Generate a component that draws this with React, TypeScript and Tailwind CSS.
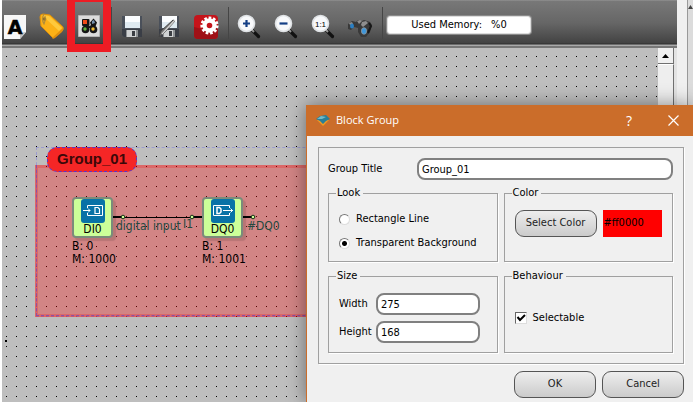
import type { ReactNode } from "react";

const UI_FONT = "font-['DejaVu_Sans_Condensed','DejaVu_Sans',sans-serif]";

function ToolButton({ label, children }: { label: string; children: ReactNode }) {
  return (
    <button type="button" aria-label={label} className="size-6 shrink-0">
      <svg viewBox="0 0 24 24" className="size-6 overflow-visible" aria-hidden="true">
        {children}
      </svg>
    </button>
  );
}

function Separator() {
  return <div className="mr-1 ml-[10px] h-8 w-px shrink-0 bg-[#454545]" />;
}

function Magnifier({ children }: { children?: ReactNode }) {
  return (
    <>
      <path d="M15.500 15.500l6 6" stroke="#111" strokeWidth="3.200" strokeLinecap="round" />
      <path d="M14 14l3 3" stroke="#999" strokeWidth="2" />
      <circle cx="9.500" cy="8.500" r="8" fill="#f8f9fb" stroke="#dfe2e5" strokeWidth="1.600" />
      {children}
    </>
  );
}

function Floppy() {
  return (
    <>
      <path d="M2 1h20v21H4l-2-2z" fill="#4a505a" />
      <path d="M2 14h20v8H4l-2-2z" fill="#3a3e46" />
      <path d="M5 1h15v12H5z" fill="#dfeaf1" />
      <path d="M5 1h15v6H5z" fill="#fbfdff" />
      <path d="M6 15h12v7H6z" fill="#8f9294" />
      <path d="M7 15h9v7H7z" fill="#d1d3d4" />
      <path d="M12 16h3v5h-3z" fill="#3b3e43" />
    </>
  );
}

function Toolbar() {
  return (
    <div
      role="toolbar"
      aria-label="Editor tools"
      className="relative flex h-12 shrink-0 items-start border-b-2 border-[#777] bg-[linear-gradient(#999_0,#787878_1px,#666_50%,#434343_43px,#2e2e2e_44px,#aaa_45px)] pl-px"
    >
      <div className="flex gap-[13px] pt-[15px]">
        <ToolButton label="Text">
          <path d="M1 0h22v17l-6 7H1z" fill="#f7f7f7" />
          <path d="M23 17l-6 7v-6z" fill="#c0c0c0" />
          <text x="12" y="19" textAnchor="middle" fontSize="19" fontWeight="bold" fontFamily="DejaVu Sans" fill="#000" stroke="#000" strokeWidth="0.5">A</text>
        </ToolButton>
        <ToolButton label="Tag">
          <path d="M0 2q0-3 3-3l7 1 13 12q1 2-1 4l-7 6q-2 2-3 0L1 11z" fill="#fbb117" stroke="#d98e0d" />
          <path d="M2 0l7 1 13 12-3 3L5 3z" fill="#ffc93c" />
          <path d="M12 23l11-10q1 2-1 4l-7 6q-2 1-3 0z" fill="#e08f0e" />
          <circle cx="4.500" cy="4" r="1.800" fill="#8b6a26" />
          <path d="M4-1q-3 5 0 10 2-4 1-8" fill="none" stroke="#b08c3a" strokeWidth="1.200" />
        </ToolButton>
        <ToolButton label="Block group">
          <path d="M1.500.500h21v21h-21z" fill="#dcdcdc" stroke="#b5b5b5" />
          <rect x="5" y="4" width="7.500" height="7" rx="1" fill="#151515" />
          <path d="M13 7.500l3.500-4 3.500 4-1.500 4h-4z" fill="#151515" />
          <circle cx="8.500" cy="14.500" r="3.800" fill="#151515" />
          <circle cx="16.500" cy="14.500" r="3.800" fill="#151515" />
          <path d="M8 10l8 4M16 10l-7 4" stroke="#151515" strokeWidth="1.500" />
          <rect x="6" y="5" width="4" height="4" fill="#f04a17" />
          <path d="M15 6l2-1 1 3-3 1z" fill="#7590ad" />
          <circle cx="8" cy="14" r="1.700" fill="#5eb13a" />
          <circle cx="16" cy="14" r="1.700" fill="#f0b92f" />
        </ToolButton>
      </div>
      <div className="flex pt-[7px]">
        <Separator />
      </div>
      <div className="flex gap-[13px] pt-[15px] pl-1">
        <ToolButton label="Save">
          <Floppy />
        </ToolButton>
        <ToolButton label="Save as">
          <Floppy />
          <path d="M18 6L7 18l-5 4 2-6L16 5z" fill="#777" stroke="#444" />
          <path d="M18 5L5 19" stroke="#d5d5d5" strokeWidth="1.300" />
        </ToolButton>
        <ToolButton label="Settings">
          <rect width="24" height="24" rx="4" fill="#c5141b" />
          <path d="M0 12q12 4 24-2v10q0 4-4 4H4q-4 0-4-4z" fill="#9f1117" />
          <circle cx="15.500" cy="10.500" r="7.600" fill="none" stroke="#fff" strokeWidth="3" strokeDasharray="2.600 1.740" />
          <circle cx="15.500" cy="10.500" r="5" fill="none" stroke="#fff" strokeWidth="4.400" />
        </ToolButton>
      </div>
      <div className="flex pt-[7px]">
        <Separator />
      </div>
      <div className="flex gap-[13px] pt-[15px] pl-1">
        <ToolButton label="Zoom in">
          <Magnifier>
            <path d="M6 8.500h7M9.500 5v7" stroke="#153f86" strokeWidth="2.200" />
          </Magnifier>
        </ToolButton>
        <ToolButton label="Zoom out">
          <Magnifier>
            <path d="M5.500 8.500h8" stroke="#153f86" strokeWidth="2.200" />
          </Magnifier>
        </ToolButton>
        <ToolButton label="Actual size">
          <Magnifier>
            <text x="9.500" y="11.500" textAnchor="middle" fontSize="8" fontFamily="Liberation Sans" fill="#000">1:1</text>
          </Magnifier>
        </ToolButton>
        <ToolButton label="Find">
          <path d="M0 9l4-3 4 1 2-2 4 1 2-1 6 2 2 3-2 7-4 5h-5l-3-5 0-4-4-1-3 3-3-1z" fill="#393939" />
          <path d="M9 6l3-1 2 1-3 3zM14 7l4-1 2 2-5 4-2-2zM1 8l3-1 1 2-3 1z" fill="#8e8e8e" />
          <path d="M21 8l2 3-3 7" fill="none" stroke="#171717" strokeWidth="2" />
          <ellipse cx="4" cy="11" rx="2" ry="2.500" fill="#2b7fc2" />
          <ellipse cx="16" cy="16" rx="2.600" ry="3.300" fill="#3e96da" stroke="#8d979d" strokeWidth="0.800" />
        </ToolButton>
      </div>
      <div className="flex pt-[7px]">
        <Separator />
      </div>
      <div className="pt-4">
        <output className="flex h-[18px] w-36 items-center justify-center gap-[9px] rounded-[3px] border border-[#ddd] bg-white text-[11px] text-black ring-1 ring-[#8a8a8a]">
          <span>Used Memory:</span>
          <span>%0</span>
        </output>
      </div>
      <div className="pointer-events-none absolute top-0 left-[65px] z-10 h-[52px] w-11 border-8 border-t-2 border-[#ed1c24]" />
    </div>
  );
}

function Block({ name, bank, memory, place, output = false }: { name: string; bank: string; memory: string; place: string; output?: boolean }) {
  return (
    <div className={`absolute top-[149px] text-[12px] leading-[13px] text-black ${place}`}>
      <div className="flex size-[41px] flex-col items-center rounded-[4px] border-2 border-[#7b8b7b] bg-[#ccff99] shadow-[3px_3px_1px_#b87575]">
        <svg viewBox="0 0 24 24" className="size-6 shrink-0" aria-hidden="true">
          <rect width="24" height="24" rx="3" fill="#0872a6" />
          {output ? (
            <g fill="none" stroke="#fff">
              <path d="M18.500 9v-2.500h-16v10h16v-2.500M12 11.500h10M19.500 9.500l2 2-2 2" />
              <path d="M6 8.500h2.500l1.500 1.500v3l-1.500 1.500h-2.500z" strokeWidth="1.500" />
            </g>
          ) : (
            <g fill="none" stroke="#fff">
              <path d="M6.500 9v-2.500h15v10h-15v-2.500M2 11.500h7M7 9.500l2 2-2 2" />
              <path d="M14 8.500h3l1.500 1.500v4.500h-4.500z" strokeWidth="1.200" />
            </g>
          )}
        </svg>
        <span>{name}</span>
      </div>
      <div className="pt-[2px] whitespace-nowrap">
        <div>B: {bank}</div>
        <div>M: {memory}</div>
      </div>
    </div>
  );
}

function Canvas() {
  return (
    <div className="relative min-w-0 flex-1 overflow-hidden bg-[#bebebe] bg-[conic-gradient(from_270deg_at_1px_1px,#000_90deg,transparent_0)] bg-[length:10px_10px] bg-[position:4px_8px]">
      <div className="absolute top-[99px] left-[34px] h-[170px] w-[400px] border border-dashed border-[#9c9ccf]" />
      <div className="absolute top-[117px] left-[33px] h-[152px] w-[400px] border-3 border-[#ff0000]/45 bg-[#ff0000]/30 bg-clip-padding" />
      <div className="absolute top-[117px] left-[34px] h-[151px] w-[400px] border border-t-0 border-dashed border-[#8c50a8]" />
      <div className="absolute top-[99px] left-[45px] flex h-[25px] w-[90px] items-center justify-center rounded-[10px] border border-dashed border-[#5a35c8] bg-[#f52626] pb-px font-['Liberation_Sans',Arial,sans-serif] text-[15px] font-bold text-[#3c0808]">
        Group_01
      </div>
      <Block name="DI0" bank="0" memory="1000" place="left-[70px]" />
      <Block name="DQ0" bank="1" memory="1001" place="left-[200px]" output />
      <svg viewBox="0 0 300 20" className="absolute top-[159px] left-0 h-5 w-[300px]" aria-hidden="true">
        <path d="M111 10h9M191 10h9M241 10h9" stroke="#000" strokeWidth="2" />
        <path d="M122 10.500h68" stroke="#000" />
        <g fill="#ccff99" stroke="#173417">
          <circle cx="121" cy="10" r="1.800" />
          <circle cx="190" cy="10" r="1.800" />
          <circle cx="251" cy="10" r="1.800" />
        </g>
      </svg>
      <span className="absolute top-[171px] left-[114px] text-[12px] leading-[14px] whitespace-nowrap text-[#24483f]">digital input</span>
      <span className="absolute top-[169px] left-[181px] text-[12px] leading-[14px] text-[#24483f]">I1</span>
      <span className="absolute top-[171px] left-[245px] text-[12px] leading-[14px] text-[#24483f]">#DQ0</span>
      <i className="absolute top-[292px] left-[3px] size-[2px] bg-black" />
    </div>
  );
}

function Group({ title, className = "", children }: { title: string; className?: string; children: ReactNode }) {
  return (
    <fieldset className="min-w-0 border border-[#a0a0a0] px-[10px] shadow-[1px_1px_0_#fff]">
      <legend className="-ml-[3px] px-px pr-[3px] leading-4">{title}</legend>
      <div className={className}>{children}</div>
    </fieldset>
  );
}

function Radio({ label, checked = false }: { label: string; checked?: boolean }) {
  return (
    <label className="flex h-6 items-center gap-[6px] whitespace-nowrap">
      <input
        type="radio"
        name="look"
        defaultChecked={checked}
        className="size-[11px] shrink-0 appearance-none rounded-full border border-[#ddd] border-t-[#777] border-l-[#777] bg-white checked:bg-[radial-gradient(circle,#000_2px,#fff_3px)]"
      />
      {label}
    </label>
  );
}

const FIELD = "h-[22px] min-w-0 rounded-[8px] border-2 border-[#808080] bg-white px-[3px] text-black outline-none";
const BUTTON = "h-[27px] w-[82px] shrink-0 rounded-[9px] border border-[#555] bg-linear-to-b from-[#eee] to-[#cbcbcb] text-[#222]";

function Dialog() {
  return (
    <form
      role="dialog"
      aria-labelledby="dialog-title"
      className="absolute top-[105px] right-0 z-20 w-[387px] border-l border-[#cb6d2a] bg-[#f0f0f0] text-[11px] text-black shadow-[0_0_18px_rgba(0,0,0,0.45)]"
    >
      <header className="flex h-[31px] items-center bg-[#cb6d2a] pl-[9px] font-['Open_Sans','Noto_Sans',sans-serif] text-white">
        <svg viewBox="0 0 14 12" className="h-3 w-[14px]" aria-hidden="true">
          <path d="M1 5l6 6 6-6z" fill="#f39a20" />
          <path d="M0 4l4-3 6-1 4 4-4 2-3 3-3-3z" fill="#287f99" />
          <path d="M1 4l4-3 5 1-4 2z" fill="#72b8c7" />
        </svg>
        <h1 id="dialog-title" className="flex-1 pl-[6px] text-[11px]">Block Group</h1>
        <button type="button" aria-label="Help" className="w-12 text-[14px]">?</button>
        <button type="button" aria-label="Close" className="flex w-10 justify-center">
          <svg viewBox="0 0 11 11" className="size-[11px]" aria-hidden="true">
            <path d="M.5.5l10 10M10.500.5l-10 10" stroke="#fff" strokeWidth="1.200" />
          </svg>
        </button>
      </header>
      <div className="pt-[11px] pr-[9px] pb-1 pl-[11px]">
        <div className="border border-[#a0a0a0] p-[10px] pl-[9px] shadow-[1px_1px_0_#fff]">
          <div className="flex items-center">
            <label htmlFor="group-title" className="w-[89px] shrink-0">Group Title</label>
            <input id="group-title" defaultValue="Group_01" className={`${FIELD} flex-1`} />
          </div>
          <div className="mt-[5px] grid grid-cols-2 gap-[6px]">
            <Group title="Look" className="flex h-[60px] flex-col pt-[6px]">
              <Radio label="Rectangle Line" />
              <Radio label="Transparent Background" checked />
            </Group>
            <Group title="Color" className="flex h-[60px] gap-[6px] pt-[9px]">
              <button type="button" className={BUTTON}>Select Color</button>
              <output className="flex h-[27px] w-[60px] items-center bg-[#ff0000] px-px">#ff0000</output>
            </Group>
            <Group title="Size" className="flex h-[68px] flex-col gap-[6px] pt-[9px]">
              <div className="flex items-center">
                <label htmlFor="width" className="w-[37px] shrink-0">Width</label>
                <input id="width" defaultValue="275" className={`${FIELD} w-[104px]`} />
              </div>
              <div className="flex items-center">
                <label htmlFor="height" className="w-[37px] shrink-0">Height</label>
                <input id="height" defaultValue="168" className={`${FIELD} w-[104px]`} />
              </div>
            </Group>
            <Group title="Behaviour" className="flex h-[68px] items-center">
              <label className="flex items-center gap-[6px]">
                <input
                  type="checkbox"
                  defaultChecked
                  className="peer size-3 shrink-0 appearance-none border border-[#ddd] border-t-[#666] border-l-[#666] bg-white"
                />
                <svg viewBox="0 0 12 12" className="invisible -ml-[18px] size-3 peer-checked:visible" aria-hidden="true">
                  <path d="M2.500 5l2.500 3 5-5" fill="none" stroke="#000" strokeWidth="2" />
                </svg>
                Selectable
              </label>
            </Group>
          </div>
        </div>
        <div className="mt-[7px] flex justify-end gap-[6px]">
          <button type="submit" className={BUTTON}>OK</button>
          <button type="button" className={BUTTON}>Cancel</button>
        </div>
      </div>
    </form>
  );
}

export default function App() {
  return (
    <main className={`relative flex h-screen overflow-hidden bg-white pl-[2px] ${UI_FONT}`}>
      <div className="flex min-w-0 flex-1 flex-col">
        <Toolbar />
        <div className="flex min-h-0 flex-1 bg-[#f0f0f0]">
          <Canvas />
          <div className="flex w-[19px] shrink-0 flex-col border-r-3 border-[#e3e3e3]">
            <button type="button" aria-label="Scroll up" className="flex h-4 items-center justify-center border-r border-b border-[#707070] bg-[#f0f0f0]">
              <svg viewBox="0 0 7 4" className="h-1 w-[7px]" aria-hidden="true">
                <path d="M0 4l3.500-4L7 4z" fill="#000" />
              </svg>
            </button>
            <div className="flex-1 border-t border-r border-t-white border-r-[#707070] bg-[#eee]" />
          </div>
        </div>
      </div>
      <div className="w-[10px] shrink-0 bg-[#f0f0f0]" />
      <div className="w-[6px] shrink-0 border-l border-[#999] bg-[#dcdcdc] pt-[5px]">
        <svg viewBox="0 0 5 4" className="h-1 w-[5px]" aria-hidden="true">
          <path d="M0 4l2.500-4L5 4z" fill="#444" />
        </svg>
      </div>
      <Dialog />
    </main>
  );
}
